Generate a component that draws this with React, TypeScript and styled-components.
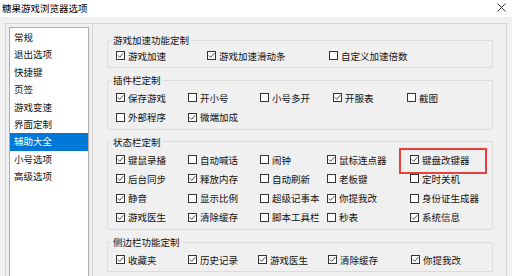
import React from 'react';
import styled, { createGlobalStyle, css } from 'styled-components';

const Global = createGlobalStyle`
  html, body { margin: 0; padding: 0; background: #f0f0f0; overflow: hidden; }
  body {
    font-family: "Noto Sans CJK SC", "Noto Sans", sans-serif;
    font-size: 9.5px;
    color: #111;
  }
  * { box-sizing: border-box; }
`;

const Window = styled.div`
  width: 512px;
  height: 276px;
  background: #f0f0f0;
  display: flex;
  flex-direction: column;
  overflow: hidden;
`;

const TitleBar = styled.div`
  height: 17px;
  flex: none;
  background: #fff;
  display: flex;
  align-items: center;
  justify-content: space-between;
  padding: 0 6px 2px 2px;
`;

const Title = styled.span`
  font-size: 9.5px;
  line-height: 12px;
  color: #000;
`;

const CloseBtn = styled.span`
  display: flex;
  width: 9px;
  height: 9px;
`;

const Frame = styled.div`
  flex: 1;
  margin: 6px 5px 0 5px;
  display: grid;
  grid-template-columns: 86px 1fr;
  border: 1px solid #d4d4d4;
  border-bottom: none;
  min-height: 0;
`;

const LeftPane = styled.div`
  padding: 3px 0 0 3px;
  min-height: 0;
`;

const ListBox = styled.ul`
  list-style: none;
  margin: 0;
  padding: 1px 0 0 0;
  width: 80px;
  height: 300px;
  background: #fff;
  border: 1px solid #acacac;
`;

const ListItem = styled.li<{ $active?: boolean }>`
  height: 17.4px;
  line-height: 17.4px;
  padding-left: 4px;
  font-size: 9.5px;
  color: #111;
  white-space: nowrap;
  ${(p) =>
    p.$active &&
    css`
      background: #0078d7;
      color: #fff;
    `}
`;

const RightPane = styled.div`
  border-left: 1px solid #d4d4d4;
  padding: 10px 13px 0 14px;
  display: flex;
  flex-direction: column;
  gap: 6px;
  min-height: 0;
`;

const Group = styled.fieldset`
  margin: 0;
  padding: 0 0 2px 0;
  border: 1px solid #dcdcdc;
  border-radius: 2px;
  min-width: 0;
`;

const Legend = styled.legend`
  margin-left: 3px;
  padding: 0 2px;
  font-size: 9.5px;
  line-height: 12px;
  color: #111;
`;

const Rows = styled.div<{ $cols: string; $tight?: boolean }>`
  display: grid;
  grid-template-columns: ${(p) => p.$cols};
  grid-auto-rows: 19.3px;
  padding-left: 8px;
  padding-top: ${(p) => (p.$tight ? '0' : '2px')};
`;

const Item = styled.label<{ $marked?: boolean }>`
  position: relative;
  display: flex;
  align-items: center;
  gap: 3px;
  white-space: nowrap;
  font-size: 9.5px;
  line-height: 12px;
  color: #111;
  ${(p) =>
    p.$marked &&
    css`
      &::after {
        content: '';
        position: absolute;
        left: -11px;
        top: -1.5px;
        width: 84px;
        height: 22px;
        border: 2px solid #e8403c;
      }
    `}
`;

const Box = styled.span`
  flex: none;
  width: 9px;
  height: 9px;
  border: 1px solid #333;
  background: #fff;
  display: flex;
  align-items: center;
  justify-content: center;
`;

type Opt = { t: string; c?: boolean; m?: boolean };

const Check: React.FC<Opt> = ({ t, c, m }) => (
  <Item $marked={m}>
    <Box>
      {c && (
        <svg width="7" height="7" viewBox="0 0 7 7">
          <path d="M0.8 3.4 L2.7 5.3 L6.3 1.2" fill="none" stroke="#333" strokeWidth="0.9" />
        </svg>
      )}
    </Box>
    <span>{t}</span>
  </Item>
);

const groups: { title: string; cols: string; tight?: boolean; items: Opt[] }[] = [
  {
    title: '游戏加速功能定制',
    cols: '91px 122px 1fr',
    tight: true,
    items: [
      { t: '游戏加速', c: true },
      { t: '游戏加速滑动条', c: true },
      { t: '自定义加速倍数' },
    ],
  },
  {
    title: '插件栏定制',
    cols: '72px 72px 73px 74px 1fr',
    items: [
      { t: '保存游戏', c: true },
      { t: '开小号' },
      { t: '小号多开' },
      { t: '开服表', c: true },
      { t: '截图' },
      { t: '外部程序' },
      { t: '微端加成', c: true },
    ],
  },
  {
    title: '状态栏定制',
    cols: '72px 72px 67px 83px 1fr',
    items: [
      { t: '键鼠录播', c: true },
      { t: '自动喊话' },
      { t: '闹钟' },
      { t: '鼠标连点器', c: true },
      { t: '键盘改键器', c: true, m: true },
      { t: '后台同步', c: true },
      { t: '释放内存', c: true },
      { t: '自动刷新' },
      { t: '老板键' },
      { t: '定时关机' },
      { t: '静音', c: true },
      { t: '显示比例' },
      { t: '超级记事本' },
      { t: '你提我改', c: true },
      { t: '身份证生成器' },
      { t: '游戏医生', c: true },
      { t: '清除缓存', c: true },
      { t: '脚本工具栏' },
      { t: '秒表' },
      { t: '系统信息', c: true },
    ],
  },
  {
    title: '侧边栏功能定制',
    cols: '72px 70px 70px 83px 1fr',
    items: [
      { t: '收藏夹', c: true },
      { t: '历史记录', c: true },
      { t: '游戏医生', c: true },
      { t: '清除缓存', c: true },
      { t: '你提我改', c: true },
    ],
  },
];

const menu = ['常规', '退出选项', '快捷键', '页签', '游戏变速', '界面定制', '辅助大全', '小号选项', '高级选项'];

export default function App() {
  return (
    <Window>
      <Global />
      <TitleBar>
        <Title>糖果游戏浏览器选项</Title>
        <CloseBtn>
          <svg width="9" height="9" viewBox="0 0 9 9">
            <path d="M0.5 0.5 L8.5 8.5 M8.5 0.5 L0.5 8.5" stroke="#222" strokeWidth="0.9" />
          </svg>
        </CloseBtn>
      </TitleBar>
      <Frame>
        <LeftPane>
          <ListBox>
            {menu.map((m) => (
              <ListItem key={m} $active={m === '辅助大全'}>
                {m}
              </ListItem>
            ))}
          </ListBox>
        </LeftPane>
        <RightPane>
          {groups.map((g) => (
            <Group key={g.title}>
              <Legend>{g.title}</Legend>
              <Rows $cols={g.cols} $tight={g.tight}>
                {g.items.map((it, i) => (
                  <Check key={i} {...it} />
                ))}
              </Rows>
            </Group>
          ))}
        </RightPane>
      </Frame>
    </Window>
  );
}
